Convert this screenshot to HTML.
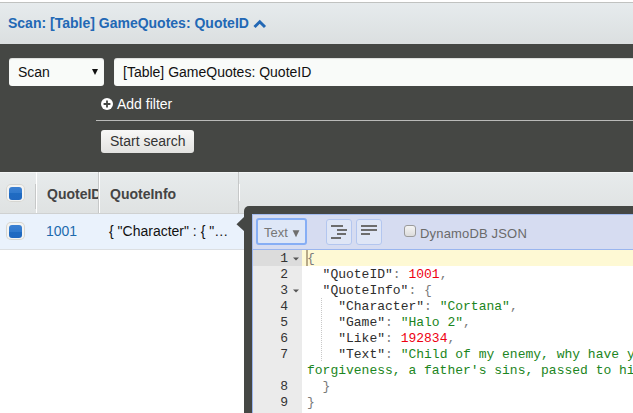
<!DOCTYPE html>
<html><head><meta charset="utf-8">
<style>
*{margin:0;padding:0;box-sizing:border-box}
html,body{width:633px;height:413px;overflow:hidden;background:#fff;font-family:"Liberation Sans",sans-serif}
.abs{position:absolute}
#hdr{left:0;top:2px;width:633px;height:42px;background:linear-gradient(#e6ebed,#dbdfe0);border-top:1px solid #c0c2c0}
#title{left:8px;top:15px;font-size:14px;font-weight:bold;color:#2268b5;white-space:nowrap;line-height:17px}
#dark{left:0;top:44px;width:633px;height:128px;background:#454744}
.box{background:#f9fbf9;border-radius:3px;box-shadow:inset 0 1px 1px rgba(0,0,0,0.12);font-size:14px;color:#111;line-height:17px;white-space:nowrap}
#sel{left:9px;top:58px;width:95px;height:28px}
#sel span{position:absolute;left:9px;top:6px}
#tri{left:83px;top:11px;width:0;height:0;border-left:3px solid transparent;border-right:3px solid transparent;border-top:6px solid #111}
#inp{left:114px;top:58px;width:530px;height:28px}
#inp span{position:absolute;left:9px;top:6px}
#addf{left:117px;top:96px;font-size:14px;color:#fff;line-height:17px;white-space:nowrap}
#plus{left:101px;top:98px;width:12px;height:12px;border-radius:50%;background:#fff}
#hr{left:96px;top:120px;width:540px;height:1px;background:#b9bab8}
#btn{left:101px;top:130px;width:93px;height:23px;border-radius:3px;background:linear-gradient(#f8f8f7,#e2e2e0);font-size:14px;color:#333;line-height:17px}
#btn span{position:absolute;left:9px;top:3px;white-space:nowrap}
#thead{left:0;top:172px;width:633px;height:42px;background:linear-gradient(#e7ebec,#dfe2e2);border-top:1px solid #f3f5f5;border-bottom:1px solid #cfd1d1}
.th{font-size:14px;font-weight:bold;color:#444;line-height:17px;white-space:nowrap;overflow:hidden}
.sep1{width:1px;background:#c6c8c8}
.sep2{width:1px;background:#fff}
#row{left:0;top:214px;width:633px;height:36px;background:#eaf2fc;border-bottom:1px solid #dcdfe2}
.cb{width:19px;height:18px;border-radius:5px;background:#f4f4f2;box-shadow:0 0 0 1px #d6d6d2 inset}
.cb i{position:absolute;left:3px;top:3px;width:13px;height:13px;border-radius:3px;background:linear-gradient(#3b80d2 0,#3079cd 50%,#1f6bc2 50%,#2068c0)}
#pop{left:244px;top:206px;width:420px;height:220px;background:#454744;border-radius:5px}
#arrow{left:237px;top:217px;width:0;height:0;border-top:7px solid transparent;border-bottom:7px solid transparent;border-right:8px solid #454744}
#tb{left:252px;top:214px;width:400px;height:36px;background:#d6dcf1;border-top:1px solid #a3bbef;border-bottom:1px solid #9ab5ee;border-left:1px solid #a3bbef}
#textbtn{left:256px;top:218px;width:51px;height:27px;border:2px solid #86aef5;border-radius:3px;background:#dee7f7;color:#767676;font-size:13px;line-height:15px}
#textbtn span{position:absolute;left:6px;top:5px;white-space:nowrap}
.fbtn{width:26px;height:26px;border:1px solid #b3c6ef;border-radius:3px;background:#dfe6f6}
.ln{position:absolute;height:2px;background:#6d6d6d}
#chk{left:404px;top:225px;width:12px;height:12px;border-radius:3px;border:1px solid #9b9b9b;background:linear-gradient(#f4f4f4,#dcdcdc)}
#djson{left:420px;top:226px;font-size:13px;color:#6a6a6a;line-height:15px;white-space:nowrap;letter-spacing:0.17px}
#gutter{left:252px;top:250px;width:50px;height:170px;background:#ebebeb;border-left:1px solid #9ab5ee}
#ed{left:302px;top:250px;width:340px;height:170px;background:#fff}
.code{font-family:"Liberation Mono",monospace;font-size:13px;line-height:16px;white-space:pre;position:absolute}
.gl{position:absolute;right:0;width:50px;text-align:right;font-family:"Liberation Mono",monospace;font-size:13px;line-height:16px;color:#333;padding-right:14px}
.k{color:#2e2e2e}.p{color:#7a7a7a}.s{color:#1b8521}.n{color:#ee0011}
</style></head><body>
<div id="hdr" class="abs"></div>
<div id="title" class="abs">Scan: [Table] GameQuotes: QuoteID </div>
<svg class="abs" style="left:253px;top:19px" width="14" height="10"><path d="M1.5 8 L6.75 2.75 L12 8" fill="none" stroke="#2268b5" stroke-width="3"/></svg>
<div id="dark" class="abs"></div>
<div id="sel" class="abs box"><span>Scan</span><div id="tri" class="abs"></div></div>
<div id="inp" class="abs box"><span>[Table] GameQuotes: QuoteID</span></div>
<div id="plus" class="abs"><svg width="12" height="12" viewBox="0 0 12 12" style="position:absolute;left:0;top:0"><path d="M6 2.6V9.4M2.6 6H9.4" stroke="#454744" stroke-width="1.8"/></svg></div>
<div id="addf" class="abs">Add filter</div>
<div id="hr" class="abs"></div>
<div id="btn" class="abs"><span>Start search</span></div>

<div id="thead" class="abs"></div>
<div class="abs sep1" style="left:35px;top:184px;height:25px"></div>
<div class="abs sep2" style="left:36px;top:172px;height:41px"></div>
<div class="abs sep1" style="left:98px;top:172px;height:41px"></div>
<div class="abs sep2" style="left:99px;top:172px;height:41px"></div>
<div class="abs sep1" style="left:238px;top:172px;height:41px"></div>
<div class="abs sep2" style="left:239px;top:184px;height:17px"></div>
<div class="abs cb" style="left:6px;top:184px"><i></i></div>
<div class="abs th" style="left:47px;top:186px;width:51px">QuoteID</div>
<div class="abs th" style="left:110px;top:186px">QuoteInfo</div>

<div id="row" class="abs"></div>
<div class="abs cb" style="left:6px;top:222px"><i></i></div>
<div class="abs" style="left:46px;top:223px;font-size:14px;line-height:17px;color:#1d6aae">1001</div>
<div class="abs" style="left:109px;top:223px;font-size:14px;line-height:17px;color:#111;white-space:nowrap">{ "Character" : { "…</div>

<svg class="abs" style="left:230px;top:210px" width="20" height="30"><path d="M6.5 14.2 L14.5 6.5 L14.5 21.5 Z" fill="#454744"/></svg>
<div id="pop" class="abs"></div>
<div id="tb" class="abs"></div>
<div id="textbtn" class="abs"><span>Text</span><svg style="position:absolute;left:34px;top:9px" width="9" height="9"><path d="M0.6 1.3 H7.4 L4 8.2 Z" fill="#6e6e6e"/></svg></div>
<div class="abs fbtn" style="left:326px;top:219px">
  <div class="ln" style="left:4px;top:5px;width:12px"></div>
  <div class="ln" style="left:10px;top:9px;width:10px"></div>
  <div class="ln" style="left:10px;top:13px;width:9px"></div>
  <div class="ln" style="left:4px;top:17px;width:10px"></div>
</div>
<div class="abs fbtn" style="left:356px;top:219px">
  <div class="ln" style="left:4px;top:5px;width:16px"></div>
  <div class="ln" style="left:4px;top:9px;width:16px"></div>
  <div class="ln" style="left:4px;top:13px;width:9px"></div>
</div>
<div id="chk" class="abs"></div>
<div id="djson" class="abs">DynamoDB JSON</div>

<div id="gutter" class="abs"></div>
<div class="abs" style="left:253px;top:250px;width:49px;height:16px;background:#dcdcdc"></div>
<div id="ed" class="abs"></div>
<div class="abs" style="left:302px;top:250px;width:340px;height:16px;background:#fef9d4"></div>
<div class="abs" style="left:306px;top:250px;width:2px;height:16px;background:#b8aa88"></div>

<div class="abs" style="left:252px;top:251px;width:50px">
<div class="gl" style="top:0">1</div>
<div class="gl" style="top:16px">2</div>
<div class="gl" style="top:32px">3</div>
<div class="gl" style="top:48px">4</div>
<div class="gl" style="top:64px">5</div>
<div class="gl" style="top:80px">6</div>
<div class="gl" style="top:96px">7</div>
<div class="gl" style="top:128px">8</div>
<div class="gl" style="top:144px">9</div>
</div>
<svg class="abs" style="left:292px;top:251px" width="8" height="60"><path d="M1 6.5h6l-3 3z" fill="#555"/><path d="M1 38.5h6l-3 3z" fill="#555"/></svg>
<div class="abs" style="left:321px;top:298px;width:1px;height:64px;background:repeating-linear-gradient(#c8c8c8 0 1px,transparent 1px 2px)"></div>

<div class="code" style="left:307px;top:251px"><span class="p">{</span>
  <span class="k">"QuoteID"</span><span class="p">: </span><span class="n">1001</span><span class="p">,</span>
  <span class="k">"QuoteInfo"</span><span class="p">: {</span>
    <span class="k">"Character"</span><span class="p">: </span><span class="s">"Cortana"</span><span class="p">,</span>
    <span class="k">"Game"</span><span class="p">: </span><span class="s">"Halo 2"</span><span class="p">,</span>
    <span class="k">"Like"</span><span class="p">: </span><span class="n">192834</span><span class="p">,</span>
    <span class="k">"Text"</span><span class="p">: </span><span class="s">"Child of my enemy, why have you</span>
<span class="s">forgiveness, a father's sins, passed to him</span>
  <span class="p">}</span>
<span class="p">}</span></div>
</body></html>
